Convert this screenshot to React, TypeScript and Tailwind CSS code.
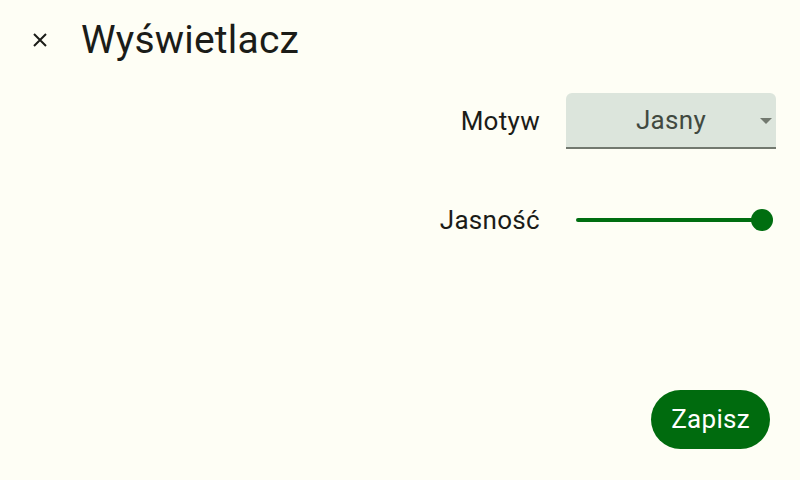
import React from "react";

const App = () => {
  return (
    <div
      className="flex h-[480px] w-[800px] flex-col bg-[#fefef5] text-[#1b1c18]"
      style={{ fontFamily: "Roboto, 'Noto Sans', sans-serif" }}
    >
      <header className="flex h-[80px] items-center pl-[32px]">
        <button className="flex h-[16px] w-[16px] items-center justify-center">
          <svg width="14" height="14" viewBox="0 0 14 14">
            <path d="M1 1 L13 13 M13 1 L1 13" stroke="#1b1c18" strokeWidth="2" />
          </svg>
        </button>
        <h1 className="ml-[33px] text-[39px] leading-none tracking-[0.2px]">Wyświetlacz</h1>
      </header>

      <div className="flex flex-col items-end gap-[51px] pr-[24px] pt-[13px]">
        <div className="flex items-center gap-[26px]">
          <span className="text-[26px] tracking-[0.3px]">Motyw</span>
          <div className="relative flex h-[56px] w-[210px] items-center justify-center rounded-t-[6px] border-b-2 border-[#72796f] bg-[#dce5dc]">
            <span className="text-[26px] tracking-[0.3px] text-[#414940]">Jasny</span>
            <svg className="absolute right-[4px] top-[25px]" width="12" height="6" viewBox="0 0 12 6">
              <path d="M0 0 L12 0 L6 6 Z" fill="#72796f" />
            </svg>
          </div>
        </div>

        <div className="flex items-center gap-[26px]">
          <span className="text-[26px] tracking-[0.3px]">Jasność</span>
          <div className="relative flex h-[40px] w-[210px] items-center">
            <div className="ml-[10px] mr-[14px] h-[4px] flex-1 rounded-full bg-[#006e10]" />
            <div className="absolute right-[3px] top-[9px] h-[22px] w-[22px] rounded-full bg-[#006e10]" />
          </div>
        </div>
      </div>

      <div className="mt-auto flex justify-end pb-[31px] pr-[30px]">
        <button className="h-[59px] rounded-full bg-[#006b0e] px-[20px] text-[26px] tracking-[0.3px] text-white">
          Zapisz
        </button>
      </div>
    </div>
  );
};

export default App;
